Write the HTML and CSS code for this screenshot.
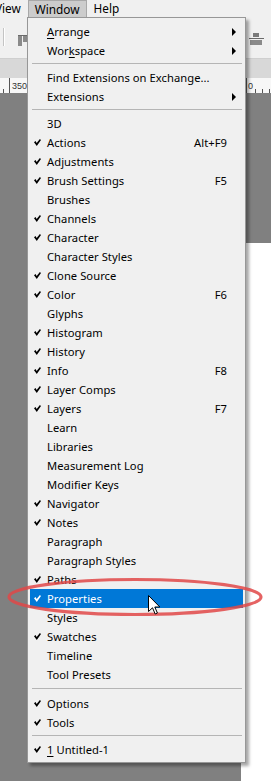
FILE: index.html
```html
<!DOCTYPE html>
<html>
<head>
<meta charset="utf-8">
<link rel="stylesheet" href="styles.css">
</head>
<body>
<div class="app">
  <div class="menubar">
    <span class="mb-item mb-view">View</span>
    <span class="mb-item mb-active">Window</span>
    <span class="mb-item">Help</span>
  </div>
  <div class="toolbar">
    <div class="tb-left">
      <span class="tb-sep"></span>
      <svg class="tb-icon" width="10" height="12" viewBox="0 0 10 12"><rect x="0" y="0" width="10" height="1" fill="#6a6a6a"/><rect x="0" y="1" width="4" height="10" fill="#8a8a8a"/><rect x="5" y="1" width="4" height="6" fill="#8a8a8a"/></svg>
    </div>
    <svg class="tb-icon-r" width="15" height="13" viewBox="0 0 15 13"><rect x="4" y="0" width="6" height="4" fill="#7a7a7a"/><rect x="0" y="5" width="15" height="1" fill="#6a6a6a"/><rect x="1" y="7" width="12" height="5" fill="#8a8a8a"/></svg>
  </div>
  <div class="band"></div>
  <div class="ruler">
    <svg width="271" height="15" viewBox="0 0 271 15">
      <line x1="3.5" y1="11" x2="3.5" y2="15" stroke="#555"/>
      <line x1="9.5" y1="0" x2="9.5" y2="15" stroke="#555"/>
      <text x="12" y="11" class="ruler-num">350</text>
      <line x1="246.5" y1="0" x2="246.5" y2="15" stroke="#555"/>
      <text x="248" y="11" class="ruler-num">0</text>
      <line x1="255.5" y1="11" x2="255.5" y2="15" stroke="#555"/>
      <line x1="262.5" y1="11" x2="262.5" y2="15" stroke="#555"/>
      <line x1="269.5" y1="11" x2="269.5" y2="15" stroke="#555"/>
    </svg>
  </div>
  <div class="canvas">
    <div class="blank"></div>
  </div>
</div>

<div class="menu">
  <div class="item sub"><span class="ck"></span><span class="lbl"><u>A</u>rrange</span><span class="arrow"></span></div>
  <div class="item sub"><span class="ck"></span><span class="lbl">Wor<u>k</u>space</span><span class="arrow"></span></div>
  <div class="sep"></div>
  <div class="item"><span class="ck"></span><span class="lbl">Find Extensions on Exchange...</span></div>
  <div class="item sub"><span class="ck"></span><span class="lbl">Extensions</span><span class="arrow"></span></div>
  <div class="sep"></div>
  <div class="item"><span class="ck"></span><span class="lbl">3D</span></div>
  <div class="item on"><span class="ck"></span><span class="lbl">Actions</span><span class="key">Alt+F9</span></div>
  <div class="item on"><span class="ck"></span><span class="lbl">Adjustments</span></div>
  <div class="item on"><span class="ck"></span><span class="lbl">Brush Settings</span><span class="key">F5</span></div>
  <div class="item"><span class="ck"></span><span class="lbl">Brushes</span></div>
  <div class="item on"><span class="ck"></span><span class="lbl">Channels</span></div>
  <div class="item on"><span class="ck"></span><span class="lbl">Character</span></div>
  <div class="item"><span class="ck"></span><span class="lbl">Character Styles</span></div>
  <div class="item on"><span class="ck"></span><span class="lbl">Clone Source</span></div>
  <div class="item on"><span class="ck"></span><span class="lbl">Color</span><span class="key">F6</span></div>
  <div class="item"><span class="ck"></span><span class="lbl">Glyphs</span></div>
  <div class="item on"><span class="ck"></span><span class="lbl">Histogram</span></div>
  <div class="item on"><span class="ck"></span><span class="lbl">History</span></div>
  <div class="item on"><span class="ck"></span><span class="lbl">Info</span><span class="key">F8</span></div>
  <div class="item on"><span class="ck"></span><span class="lbl">Layer Comps</span></div>
  <div class="item on"><span class="ck"></span><span class="lbl">Layers</span><span class="key">F7</span></div>
  <div class="item"><span class="ck"></span><span class="lbl">Learn</span></div>
  <div class="item"><span class="ck"></span><span class="lbl">Libraries</span></div>
  <div class="item"><span class="ck"></span><span class="lbl">Measurement Log</span></div>
  <div class="item"><span class="ck"></span><span class="lbl">Modifier Keys</span></div>
  <div class="item on"><span class="ck"></span><span class="lbl">Navigator</span></div>
  <div class="item on"><span class="ck"></span><span class="lbl">Notes</span></div>
  <div class="item"><span class="ck"></span><span class="lbl">Paragraph</span></div>
  <div class="item"><span class="ck"></span><span class="lbl">Paragraph Styles</span></div>
  <div class="item on"><span class="ck"></span><span class="lbl">Paths</span></div>
  <div class="item on hl"><span class="ck"></span><span class="lbl">Properties</span></div>
  <div class="item"><span class="ck"></span><span class="lbl">Styles</span></div>
  <div class="item on"><span class="ck"></span><span class="lbl">Swatches</span></div>
  <div class="item"><span class="ck"></span><span class="lbl">Timeline</span></div>
  <div class="item"><span class="ck"></span><span class="lbl">Tool Presets</span></div>
  <div class="sep sep-wide"></div>
  <div class="item on"><span class="ck"></span><span class="lbl">Options</span></div>
  <div class="item on"><span class="ck"></span><span class="lbl">Tools</span></div>
  <div class="sep"></div>
  <div class="item on"><span class="ck"></span><span class="lbl"><u>1</u> Untitled-1</span></div>
</div>

<svg class="ring" width="271" height="50" viewBox="0 0 271 50">
  <ellipse cx="135" cy="25" rx="126" ry="17.5" fill="none" stroke="#e04848" stroke-opacity="0.85" stroke-width="3.2"/>
</svg>

<svg class="cursor" width="13" height="20" viewBox="0 0 13 20">
  <path d="M0.5 0.5 L0.5 16.5 L4.5 12.8 L7.2 19 L9.4 18 L6.8 12 L11.8 12 Z" fill="#fff" stroke="#000" stroke-width="1" stroke-linejoin="miter"/>
</svg>
</body>
</html>
```

FILE: styles.css
```css
* { box-sizing: border-box; }
html, body { margin: 0; padding: 0; }
body {
  width: 271px;
  height: 781px;
  overflow: hidden;
  position: relative;
  font-family: "Noto Sans", "Open Sans", sans-serif;
  font-size: 11.2px;
  color: #000;
  background: #f0f0f0;
}
.app {
  display: flex;
  flex-direction: column;
  height: 781px;
}
.menubar {
  height: 17px;
  display: flex;
  align-items: stretch;
  background: #f0f0f0;
  line-height: 16px;
  font-size: 11.8px;
}
.mb-item {
  padding: 0 7px;
}
.mb-view { margin-left: -12px; }
.mb-active {
  background: #cccccc;
  border: 1px solid #a8a8a8;
  border-bottom: none;
  padding: 0 6px;
}
.toolbar {
  height: 41px;
  background: #f0f0f0;
  display: flex;
  justify-content: space-between;
  align-items: flex-start;
}
.tb-left {
  display: flex;
  align-items: flex-start;
}
.tb-sep {
  width: 1px;
  height: 18px;
  margin: 11px 0 0 3px;
  background: #c4c4c4;
  box-shadow: 1px 0 0 #fff;
}
.tb-icon { margin: 18px 0 0 14px; }
.tb-icon-r { margin: 16px 7px 0 0; }
.band {
  height: 20px;
  background: #d8d8d8;
  border-top: 1px solid #cfcfcf;
}
.ruler {
  height: 15px;
  background: #f7f7f7;
  display: flex;
}
.ruler svg { display: block; }
.ruler-num {
  font-family: "Liberation Sans", sans-serif;
  font-size: 9px;
  fill: #333;
}
.canvas {
  flex: 1;
  background: #808080;
  display: flex;
  justify-content: flex-end;
}
.blank {
  width: 30px;
  margin-top: 150px;
  background: #ffffff;
}

/* dropdown menu */
.menu {
  position: absolute;
  left: 27px;
  top: 17px;
  width: 219px;
  background: #f0f0f0;
  border: 1px solid #979797;
  padding: 4px 2px 3px;
  box-shadow: 3px 3px 3px rgba(0, 0, 0, 0.35);
  display: flex;
  flex-direction: column;
}
.item {
  height: 19px;
  display: flex;
  align-items: center;
  padding-right: 16px;
  white-space: nowrap;
  letter-spacing: 0.05px;
}
.item.sub { padding-right: 7px; }
.ck {
  width: 17px;
  height: 19px;
  flex: none;
  display: flex;
  align-items: center;
  padding-left: 4px;
}
.item.on .ck::before {
  content: "";
  width: 7px;
  height: 7px;
  background: #000;
  clip-path: polygon(0 45%, 22% 30%, 38% 58%, 84% 0, 100% 14%, 40% 100%);
}
.item.hl {
  background: #0078d7;
  color: #fff;
}
.item.hl .ck::before { background: #fff; }
.lbl { flex: 1; }
.lbl u { text-underline-offset: 2px; }
.key { flex: none; }
.arrow {
  width: 0;
  height: 0;
  border-left: 4px solid #000;
  border-top: 4px solid transparent;
  border-bottom: 4px solid transparent;
}
.sep {
  height: 8px;
  padding-top: 3px;
  padding-left: 2px;
  padding-right: 1px;
}
.sep::before {
  content: "";
  display: block;
  height: 1px;
  background: #b5b5b5;
}
.sep-wide { height: 10px; padding-top: 4px; }

.ring {
  position: absolute;
  left: 0;
  top: 572px;
}
.cursor {
  position: absolute;
  left: 148px;
  top: 595px;
}
```
